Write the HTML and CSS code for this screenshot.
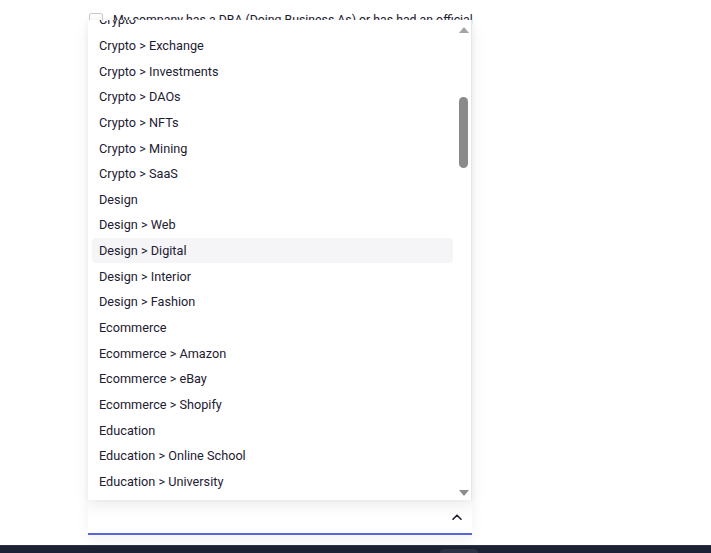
FILE: index.html
```html
<!DOCTYPE html>
<html lang="en">
<head>
    <meta charset="UTF-8">
    <meta name="viewport" content="width=device-width, initial-scale=1.0">
    <title>Business details</title>
    <link rel="stylesheet" href="styles.css">
</head>
<body>
    <div class="page">
        <div class="form">
            <label class="check-row">
                <span class="checkbox"></span>
                <span class="check-text">My company has a DBA (Doing Business As) or has had an official</span>
            </label>

            <div class="select">
                <div class="menu">
                    <div class="options">
                        <div class="option">Crypto</div>
                        <div class="option">Crypto &gt; Exchange</div>
                        <div class="option">Crypto &gt; Investments</div>
                        <div class="option">Crypto &gt; DAOs</div>
                        <div class="option">Crypto &gt; NFTs</div>
                        <div class="option">Crypto &gt; Mining</div>
                        <div class="option">Crypto &gt; SaaS</div>
                        <div class="option">Design</div>
                        <div class="option">Design &gt; Web</div>
                        <div class="option active">Design &gt; Digital</div>
                        <div class="option">Design &gt; Interior</div>
                        <div class="option">Design &gt; Fashion</div>
                        <div class="option">Ecommerce</div>
                        <div class="option">Ecommerce &gt; Amazon</div>
                        <div class="option">Ecommerce &gt; eBay</div>
                        <div class="option">Ecommerce &gt; Shopify</div>
                        <div class="option">Education</div>
                        <div class="option">Education &gt; Online School</div>
                        <div class="option">Education &gt; University</div>
                        <div class="option">Education &gt; Tutoring</div>
                    </div>
                    <div class="scrollbar">
                        <span class="arrow up"></span>
                        <div class="track"><span class="thumb"></span></div>
                        <span class="arrow down"></span>
                    </div>
                </div>
                <div class="select-input">
                    <svg class="chevron" width="10" height="6" viewBox="0 0 10 6">
                        <path d="M1 5.2 L5 1.2 L9 5.2" fill="none" stroke="#1d2033" stroke-width="1.6" stroke-linecap="round" stroke-linejoin="round"/>
                    </svg>
                </div>
            </div>
        </div>
    </div>
    <div class="taskbar"><span class="tab"></span></div>
</body>
</html>
```
FILE: styles.css
```css
body {
    margin: 0;
    background: #ffffff;
    font-family: Roboto, "Noto Sans", sans-serif;
    color: #1d2033;
}
.page {
    height: 545px;
    overflow: hidden;
}
.form {
    width: 384px;
    margin-left: 88px;
    padding-top: 13px;
}
.check-row {
    display: flex;
    align-items: center;
    gap: 10px;
    height: 14px;
}
.checkbox {
    flex-shrink: 0;
    width: 12px;
    height: 12px;
    margin-left: 1px;
    border: 1px solid #c9cad0;
    border-radius: 2px;
    background: #fff;
}
.check-text {
    font-size: 12.3px;
    white-space: nowrap;
}
.select {
    position: relative;
    margin-top: 473px;
    box-shadow: 0 4px 14px rgba(20, 24, 40, 0.06);
}
.menu {
    position: absolute;
    left: 0;
    right: 0;
    bottom: 100%;
    height: 480px;
    display: flex;
    background: #fff;
    border-right: 1px solid #e6e7ea;
    box-shadow: 0 6px 14px rgba(20, 24, 40, 0.08), 0 0 6px rgba(20, 24, 40, 0.05);
    overflow: hidden;
    z-index: 2;
}
.options {
    flex: 1;
    padding: 0 3px 0 4px;
    margin-top: -13px;
}
.option {
    height: 25.65px;
    display: flex;
    align-items: center;
    padding-left: 7px;
    font-size: 12.7px;
    border-radius: 4px;
    white-space: nowrap;
}
.option.active {
    background: #f5f5f8;
}
.scrollbar {
    width: 15px;
    display: flex;
    flex-direction: column;
    align-items: center;
    background: #fff;
}
.arrow {
    width: 0;
    height: 0;
    border-left: 5px solid transparent;
    border-right: 5px solid transparent;
}
.arrow.up {
    margin-top: 7px;
    border-bottom: 6px solid #a3a3a3;
}
.arrow.down {
    margin-bottom: 4px;
    border-top: 6px solid #8c8c8c;
}
.track {
    flex: 1;
}
.thumb {
    display: block;
    width: 9px;
    height: 71px;
    margin-top: 64px;
    border-radius: 5px;
    background: #8a8a8a;
}
.select-input {
    height: 33px;
    display: flex;
    align-items: center;
    justify-content: flex-end;
    padding-right: 10px;
    background: #fff;
    border-bottom: 2px solid #5666e0;
}
.chevron {
    display: block;
}
.taskbar {
    height: 8px;
    background: #1c2233;
    border-top: 1px solid #2c3344;
}
.tab {
    display: block;
    width: 38px;
    height: 5px;
    margin: 3px 0 0 440px;
    border-radius: 4px 4px 0 0;
    background: #2b3244;
}
```
